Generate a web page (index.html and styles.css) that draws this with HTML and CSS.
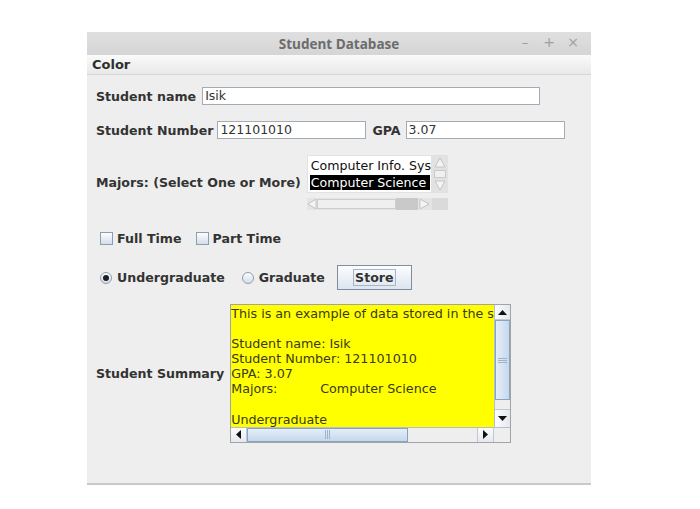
FILE: index.html
```html
<!DOCTYPE html>
<html>
<head>
<meta charset="utf-8">
<link rel="stylesheet" href="styles.css">
</head>
<body>
<div class="window">
  <div class="titlebar">
    <span class="title">Student Database</span>
    <div class="controls"><span class="ctl">–</span><span class="ctl plus">+</span><span class="ctl close">×</span></div>
  </div>
  <div class="menubar"><span class="menu">Color</span></div>
  <div class="content">
    <div class="row row1">
      <span class="lbl">Student name</span>
      <div class="field f-name">Isik</div>
    </div>
    <div class="row row2">
      <span class="lbl">Student Number</span>
      <div class="field f-num">121101010</div>
      <span class="lbl gpa">GPA</span>
      <div class="field f-gpa">3.07</div>
    </div>
    <div class="row row3">
      <span class="lbl">Majors: (Select One or More)</span>
      <div class="listpane">
        <div class="listmain">
          <div class="list">
            <div class="item">Computer Info. Sys</div>
            <div class="item sel">Computer Science</div>
          </div>
          <div class="lvscroll">
            <svg class="larrow" width="14" height="14" viewBox="0 0 14 14"><path d="M2 12 L7 3 L12 12 Z" fill="#f4f4f4" stroke="#c4c4c4"/></svg>
            <div class="lvthumb"></div>
            <svg class="larrow" width="14" height="14" viewBox="0 0 14 14"><path d="M2 2 L7 11 L12 2 Z" fill="#f4f4f4" stroke="#c4c4c4"/></svg>
          </div>
        </div>
        <div class="listbottom">
          <div class="lhscroll">
            <svg width="10" height="12" viewBox="0 0 10 12"><path d="M9 1 L1 6 L9 11 Z" fill="#f4f4f4" stroke="#c4c4c4"/></svg>
            <div class="lhthumb"></div>
            <div class="lhtrack"></div>
            <svg width="12" height="12" viewBox="0 0 12 12"><path d="M2 1 L11 6 L2 11 Z" fill="#f4f4f4" stroke="#c4c4c4"/></svg>
          </div>
          <div class="lcorner"></div>
        </div>
      </div>
    </div>
    <div class="row row4">
      <span class="check"></span><span class="lbl">Full Time</span>
      <span class="check check2"></span><span class="lbl">Part Time</span>
    </div>
    <div class="row row5">
      <span class="radio on"></span><span class="lbl">Undergraduate</span>
      <span class="radio radio2"></span><span class="lbl">Graduate</span>
      <div class="button"><span class="focus">Store</span></div>
    </div>
    <div class="row row6">
      <span class="lbl">Student Summary</span>
      <div class="tapane">
        <div class="tamain">
          <div class="text">
            <div class="line">This is an example of data stored in the s</div>
            <div class="line"> </div>
            <div class="line">Student name: Isik</div>
            <div class="line">Student Number: 121101010</div>
            <div class="line">GPA: 3.07</div>
            <div class="line"><span class="tab">Majors:</span>Computer Science</div>
            <div class="line"> </div>
            <div class="line">Undergraduate</div>
          </div>
          <div class="vscroll">
            <div class="sbtn"><svg width="9" height="5" viewBox="0 0 9 5"><path d="M0 5 L4.5 0 L9 5 Z" fill="#111"/></svg></div>
            <div class="vthumb"><span class="grip vg"></span></div>
            <div class="vtrack"></div>
            <div class="sbtn"><svg width="9" height="5" viewBox="0 0 9 5"><path d="M0 0 L4.5 5 L9 0 Z" fill="#111"/></svg></div>
          </div>
        </div>
        <div class="tabottom">
          <div class="hscroll">
            <div class="hbtn"><svg width="5" height="9" viewBox="0 0 5 9"><path d="M5 0 L0 4.5 L5 9 Z" fill="#111"/></svg></div>
            <div class="hthumb"><span class="grip hg"></span></div>
            <div class="htrack"></div>
            <div class="hbtn"><svg width="5" height="9" viewBox="0 0 5 9"><path d="M0 0 L5 4.5 L0 9 Z" fill="#111"/></svg></div>
          </div>
          <div class="corner"></div>
        </div>
      </div>
    </div>
  </div>
</div>
</body>
</html>
```

FILE: styles.css
```css
html, body {
  margin: 0;
  padding: 0;
  background: #ffffff;
}
body {
  font-family: "DejaVu Sans", sans-serif;
  color: #333333;
}
.window {
  margin: 32px 0 0 87px;
  width: 504px;
  height: 451px;
  background: #eeeeee;
  border-bottom: 2px solid #c9c9c9;
  overflow: hidden;
}
.titlebar {
  height: 23px;
  background: linear-gradient(#dfdfdf, #d5d5d5);
  display: flex;
  align-items: center;
  justify-content: center;
  position: relative;
}
.title {
  font-family: "Open Sans", sans-serif;
  font-weight: bold;
  font-size: 13.5px;
  color: #6c6c6c;
}
.controls {
  position: absolute;
  right: 12px;
  top: 2px;
  display: flex;
  gap: 12px;
  font-family: "DejaVu Sans", sans-serif;
  font-size: 14px;
  color: #a0a0a0;
}
.ctl { width: 12px; text-align: center; }
.menubar {
  height: 19px;
  background: linear-gradient(#fafafa, #e9e9e9);
  border-bottom: 1px solid #d6d6d6;
  display: flex;
  align-items: center;
}
.menu {
  margin-left: 5px;
  font-weight: bold;
  font-size: 13px;
  color: #2e2e2e;
}
.content {
  padding-left: 9px;
}
.row {
  display: flex;
  align-items: center;
}
.lbl {
  font-weight: bold;
  font-size: 12.6px;
  color: #333333;
  white-space: nowrap;
}
.field {
  box-sizing: border-box;
  height: 18px;
  border: 1px solid #a3abb5;
  background: #ffffff;
  font-size: 12.5px;
  line-height: 16px;
  padding-left: 2px;
  color: #333333;
}
.row1 { margin-top: 12px; }
.f-name { width: 338px; margin-left: 6px; }
.row2 { margin-top: 16px; }
.f-num { width: 149px; margin-left: 4px; }
.gpa { margin-left: 6px; }
.f-gpa { width: 159px; margin-left: 5px; }

.row3 { margin-top: 16px; }
.listpane {
  margin-left: 6px;
  width: 141px;
  height: 55px;
  display: flex;
  flex-direction: column;
}
.listmain {
  display: flex;
  height: 38px;
}
.list {
  width: 125px;
  background: #ffffff;
  box-sizing: border-box;
  padding: 2px 0 0 2px;
  border: 1px solid #e2e2e2;
}
.item {
  font-size: 12.6px;
  line-height: 15px;
  height: 15px;
  padding-left: 1px;
  color: #111111;
  white-space: nowrap;
  width: 119px;
}
.item.sel {
  background: #000000;
  color: #ffffff;
  margin-top: 2px;
}
.lvscroll {
  width: 16px;
  background: #e2e2e2;
  display: flex;
  flex-direction: column;
  align-items: center;
}
.larrow { display: block; }
.lvthumb {
  width: 12px;
  height: 8px;
  border: 1px solid #c9c9c9;
  background: #f0f0f0;
  box-sizing: border-box;
  margin: 1px 0;
}
.listbottom {
  display: flex;
  margin-top: 5px;
  height: 12px;
}
.lhscroll {
  width: 125px;
  background: #e4e4e4;
  display: flex;
  align-items: center;
}
.lhscroll svg { display: block; }
.lhthumb {
  width: 79px;
  height: 10px;
  box-sizing: border-box;
  border: 1px solid #cdcdcd;
  background: #efefef;
}
.lhtrack {
  width: 22px;
  height: 12px;
  background: #c9c9c9;
}
.lcorner {
  width: 16px;
  background: #dadada;
}

.row4 { margin-top: 20px; height: 16px; }
.check {
  width: 13px;
  height: 13px;
  box-sizing: border-box;
  border: 1px solid #8d9db0;
  background: linear-gradient(#fbfcfe, #d5dee9);
  margin: 0 4px 0 4px;
}
.check2 { margin-left: 14px; }

.row5 { margin-top: 19px; height: 25px; }
.radio {
  width: 12px;
  height: 12px;
  box-sizing: border-box;
  border: 1px solid #8d9db0;
  border-radius: 50%;
  background: linear-gradient(#fbfcfe, #d5dee9);
  margin: 0 5px 0 4px;
  display: flex;
  align-items: center;
  justify-content: center;
}
.radio.on::after {
  content: "";
  width: 6px;
  height: 6px;
  border-radius: 50%;
  background: #1e1e1e;
}
.radio2 { margin-left: 17px; }
.button {
  margin-left: 12px;
  width: 75px;
  height: 25px;
  box-sizing: border-box;
  border: 1px solid #7d8ea2;
  background: linear-gradient(#fcfdfe, #dde5ef);
  display: flex;
  align-items: center;
  justify-content: center;
}
.focus {
  font-weight: bold;
  font-size: 12.6px;
  color: #333333;
  border: 1px solid #a5b6c9;
  padding: 0 1px;
  line-height: 15px;
}

.row6 { margin-top: 14px; }
.tapane {
  margin-left: 6px;
  width: 281px;
  height: 139px;
  box-sizing: border-box;
  border: 1px solid #a3a3a3;
  display: flex;
  flex-direction: column;
  background: #eeeeee;
}
.tamain {
  display: flex;
  height: 122px;
}
.text {
  width: 265px;
  background: #ffff00;
  overflow: hidden;
  padding-top: 1px;
  box-sizing: border-box;
}
.line {
  font-size: 12.7px;
  line-height: 15.1px;
  height: 15.1px;
  white-space: pre;
  color: #3a3a1a;
  padding-left: 0;
}
.tab {
  display: inline-block;
  width: 89px;
}
.vscroll {
  width: 15px;
  border-left: 1px solid #b7bec8;
  display: flex;
  flex-direction: column;
  background: #eeeeee;
}
.sbtn {
  height: 15px;
  display: flex;
  align-items: center;
  justify-content: center;
  background: linear-gradient(90deg, #fbfcfd, #e4e9ef);
  border-bottom: 1px solid #c3c9d2;
  box-sizing: border-box;
}
.sbtn:last-child {
  border-bottom: none;
  border-top: 1px solid #c3c9d2;
  height: 18px;
}
.vthumb {
  height: 80px;
  box-sizing: border-box;
  border: 1px solid #8aa3c0;
  background: linear-gradient(90deg, #e5eef8, #c6d8ec);
  display: flex;
  align-items: center;
  justify-content: center;
}
.vtrack { flex: 1; background: #eeeeee; }
.grip { display: block; }
.vg {
  width: 9px;
  height: 5px;
  background: repeating-linear-gradient(#9fb3cc 0 1px, transparent 1px 2px);
}
.tabottom {
  display: flex;
  height: 15px;
  border-top: 1px solid #b7bec8;
}
.hscroll {
  width: 265px;
  display: flex;
}
.hbtn {
  width: 16px;
  display: flex;
  align-items: center;
  justify-content: center;
  background: linear-gradient(#fbfcfd, #e4e9ef);
  border-right: 1px solid #c3c9d2;
  box-sizing: border-box;
}
.hbtn:last-child {
  border-right: none;
  border-left: 1px solid #c3c9d2;
}
.hthumb {
  width: 161px;
  box-sizing: border-box;
  border: 1px solid #8aa3c0;
  background: linear-gradient(#e5eef8, #c6d8ec);
  display: flex;
  align-items: center;
  justify-content: center;
}
.hg {
  width: 5px;
  height: 9px;
  background: repeating-linear-gradient(90deg, #9fb3cc 0 1px, transparent 1px 2px);
}
.htrack { flex: 1; background: #eeeeee; }
.corner {
  width: 16px;
  border-left: 1px solid #c3c9d2;
  background: #eeeeee;
}
```
